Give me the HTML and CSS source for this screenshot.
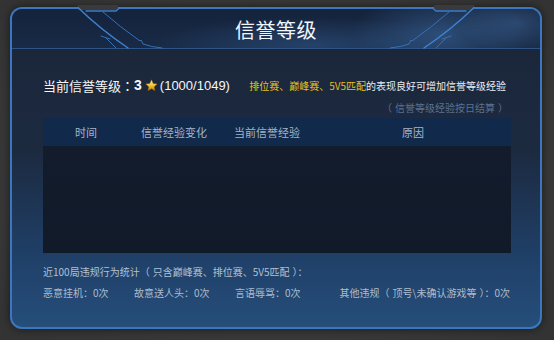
FILE: index.html
```html
<!DOCTYPE html>
<html lang="zh">
<head>
<meta charset="utf-8">
<title>信誉等级</title>
<link rel="stylesheet" href="styles.css">
</head>
<body>
<div class="panel">
  <svg class="deco" width="532" height="50" viewBox="0 0 532 50">
    <rect x="68" y="-2" width="40" height="5" fill="#3a3a3b"/>
    <rect x="424" y="-2" width="40" height="5" fill="#3a3a3b"/>
    <g fill="none" stroke-linecap="round">
      <path d="M76,4 L106,4 L110,0.5" stroke="#3c7cc8" stroke-width="1.3"/>
      <path d="M456,4 L426,4 L422,0.5" stroke="#3c7cc8" stroke-width="1.3"/>
      <path d="M68,0.5 Q90,22 118,41" stroke="#3f82d2" stroke-width="1.4"/>
      <path d="M464,0.5 Q442,22 414,41" stroke="#3f82d2" stroke-width="1.4"/>
      <path d="M93,5 Q110,20 130,34 L131,33 L133,37 Q141,40 152,41" stroke="#3470b6" stroke-width="1"/>
      <path d="M439,5 Q422,20 402,34 L401,33 L399,37 Q391,40 380,41" stroke="#3470b6" stroke-width="1"/>
      <path d="M96,31 L106,41 M91,29 L100,32" stroke="#3470b6" stroke-width="1"/>
      <path d="M436,31 L426,41 M441,29 L432,32" stroke="#3470b6" stroke-width="1"/>
    </g>
  </svg>
  <div class="header"><h1 class="title">信誉等级</h1></div>
  <div class="content">
    <div class="level-row">
      <div class="level">当前信誉等级<span class="p">：</span><b class="num">3</b><svg class="star" width="13" height="13" viewBox="0 0 24 24"><defs><linearGradient id="sg" x1="0" y1="0" x2="0" y2="1"><stop offset="0" stop-color="#fff2a8"/><stop offset="0.55" stop-color="#f0c030"/><stop offset="1" stop-color="#b97d10"/></linearGradient></defs><path d="M12 1.5l3.2 6.9 7.4.8-5.5 5.1 1.5 7.4L12 18l-6.6 3.7 1.5-7.4L1.4 9.2l7.4-.8z" fill="url(#sg)" stroke="#8a5a08" stroke-width="0.8"/></svg><span class="exp">(1000/1049)</span></div>
      <div class="tip"><span class="hl">排位赛、巅峰赛、5V5匹配</span>的表现良好可增加信誉等级经验</div>
    </div>
    <div class="note"><span class="p po">（</span>信誉等级经验按日结算<span class="p pc">）</span></div>
    <div class="table">
      <div class="thead">
        <div class="th">时间</div>
        <div class="th">信誉经验变化</div>
        <div class="th">当前信誉经验</div>
        <div class="th">原因</div>
      </div>
      <div class="tbody"></div>
    </div>
    <div class="stats-title">近100局违规行为统计<span class="p po">（</span>只含巅峰赛、排位赛、5V5匹配<span class="p pc">）</span><span class="p">：</span></div>
    <div class="stats">
      <div class="stat s1">恶意挂机<span class="p">：</span>0次</div>
      <div class="stat s2">故意送人头<span class="p">：</span>0次</div>
      <div class="stat s3">言语辱骂<span class="p">：</span>0次</div>
      <div class="stat s4">其他违规<span class="p po">（</span>顶号\未确认游戏等<span class="p pc">）</span><span class="p">：</span>0次</div>
    </div>
  </div>
</div>
</body>
</html>
```

FILE: styles.css
```css
html, body {
  margin: 0;
  padding: 0;
}
body {
  width: 554px;
  height: 340px;
  background: radial-gradient(ellipse at 50% 50%, #454545 0%, #3a3a3a 60%, #333333 100%);
  font-family: "Noto Sans CJK SC", "Noto Sans", sans-serif;
  overflow: hidden;
  padding-top: 7px;
  padding-left: 10px;
  box-sizing: border-box;
}
.p {
  font-family: "Noto Sans CJK TC", "Noto Sans CJK SC", sans-serif;
}
.po {
  padding-right: 3px;
}
.pc {
  padding-left: 3px;
}
.panel {
  position: relative;
  width: 532px;
  height: 322px;
  box-sizing: border-box;
  border: 2px solid #3a77bf;
  border-radius: 12px;
  background: linear-gradient(180deg, #1b2538 0%, #1c2a40 45%, #20416a 80%, #254e7a 100%);
  box-shadow: 0 0 10px rgba(0, 0, 0, 0.55);
}
.deco {
  position: absolute;
  left: -2px;
  top: -2px;
  overflow: visible;
  z-index: 2;
}
.header {
  height: 39px;
  border-bottom: 1px solid #2c5585;
  border-radius: 10px 10px 0 0;
  background:
    radial-gradient(ellipse 90px 40px at 430px 24px, rgba(70, 120, 180, 0.45), rgba(70, 120, 180, 0) 100%),
    radial-gradient(ellipse 160px 28px at 300px 36px, rgba(60, 110, 170, 0.35), rgba(60, 110, 170, 0) 100%),
    radial-gradient(ellipse 60px 30px at 505px 14px, rgba(80, 130, 190, 0.35), rgba(80, 130, 190, 0) 100%),
    linear-gradient(180deg, #15233c 0%, #182a46 100%);
  display: flex;
  align-items: center;
  justify-content: center;
}
.title {
  margin: 0;
  font-size: 20px;
  font-weight: 400;
  color: #f2f6fb;
  line-height: 24px;
  margin-top: 2px;
  letter-spacing: 0.5px;
}
.content {
  padding: 26px 30px 0 31px;
}
.level-row {
  display: flex;
  align-items: center;
  height: 20px;
}
.level {
  font-size: 13px;
  color: #f4f6f9;
  display: flex;
  align-items: center;
  white-space: nowrap;
}
.num {
  font-family: "Liberation Sans", Arial, sans-serif;
  font-weight: 700;
  font-size: 14px;
}
.star {
  margin: 0 2px 0 3px;
}
.exp {
  font-family: "Liberation Sans", Arial, sans-serif;
  font-size: 13px;
}
.tip {
  margin-left: auto;
  font-size: 10px;
  color: #e9edf2;
  white-space: nowrap;
  padding-right: 4px;
}
.hl {
  color: #e6c01e;
}
.note {
  margin-top: 6px;
  height: 14px;
  line-height: 14px;
  font-size: 10px;
  color: #5a7291;
  text-align: right;
  padding-right: 2px;
}
.table {
  margin-top: 3px;
  width: 468px;
}
.thead {
  height: 28px;
  background: #11294a;
  border-radius: 3px 3px 0 0;
  display: grid;
  grid-template-columns: 86px 90px 96px 196px;
  align-items: center;
}
.th {
  text-align: center;
  font-size: 11px;
  color: #a4b5cb;
}
.tbody {
  height: 107px;
  background: linear-gradient(180deg, #131c2c 0%, #111a29 100%);
}
.stats-title {
  margin-top: 12px;
  height: 14px;
  line-height: 14px;
  font-size: 10px;
  color: #b3c1d2;
  white-space: nowrap;
}
.stats {
  margin-top: 7px;
  display: flex;
  height: 14px;
  line-height: 14px;
  font-size: 10px;
  color: #aebccd;
  white-space: nowrap;
}
.s1 { width: 91px; }
.s2 { width: 101px; }
.s4 { margin-left: auto; }
```
